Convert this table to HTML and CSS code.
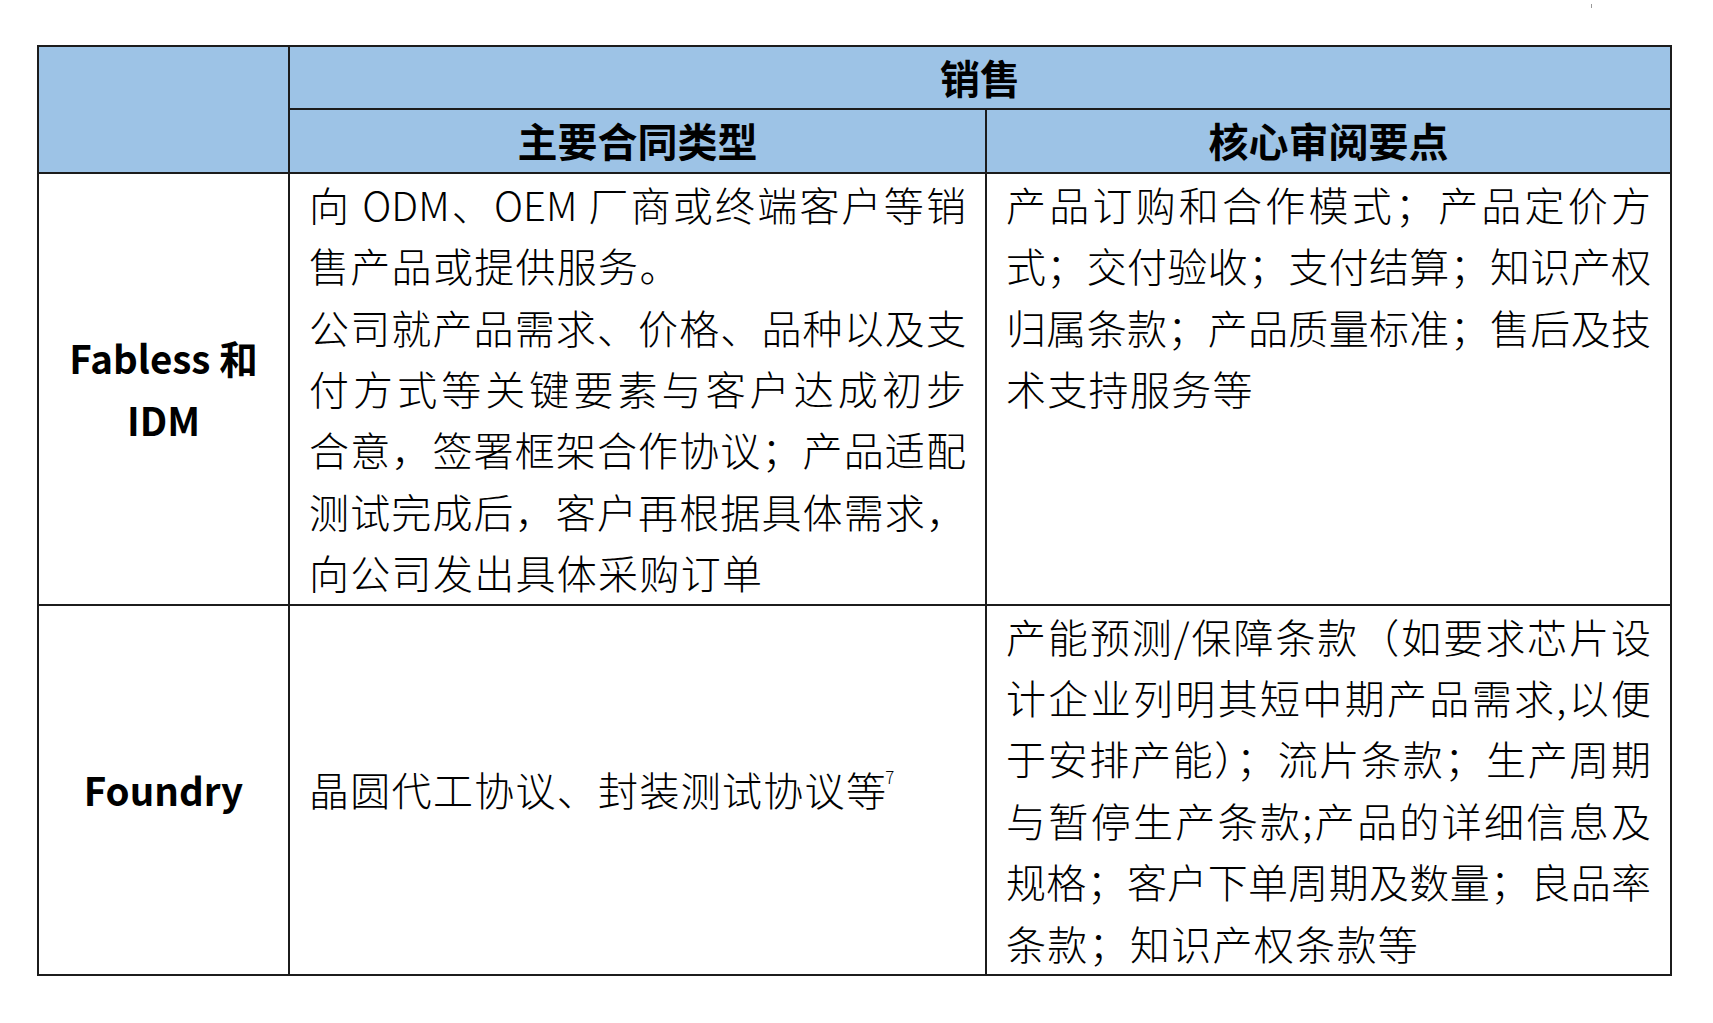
FILE: index.html
```html
<!DOCTYPE html>
<html lang="zh-CN">
<head>
<meta charset="utf-8">
<title>销售</title>
<link rel="stylesheet" href="styles.css">
</head>
<body>
<span class="speck"></span>
<div class="page">
  <table class="grid">
    <colgroup>
      <col class="c-type">
      <col class="c-contract">
      <col class="c-review">
    </colgroup>
    <thead>
      <tr>
        <th rowspan="2" class="blank"></th>
        <th colspan="2">销售</th>
      </tr>
      <tr>
        <th>主要合同类型</th>
        <th>核心审阅要点</th>
      </tr>
    </thead>
    <tbody>
      <tr>
        <td class="label">Fabless 和<br>IDM</td>
        <td class="text">
          <span class="ln">向 ODM、OEM 厂商或终端客户等销</span>
          <span class="ln end">售产品或提供服务。</span>
          <span class="ln">公司就产品需求、价格、品种以及支</span>
          <span class="ln">付方式等关键要素与客户达成初步</span>
          <span class="ln">合意，签署框架合作协议；产品适配</span>
          <span class="ln">测试完成后，客户再根据具体需求，</span>
          <span class="ln end">向公司发出具体采购订单</span>
        </td>
        <td class="text">
          <span class="ln">产品订购和合作模式；产品定价方</span>
          <span class="ln">式；交付验收；支付结算；知识产权</span>
          <span class="ln">归属条款；产品质量标准；售后及技</span>
          <span class="ln end">术支持服务等</span>
        </td>
      </tr>
      <tr>
        <td class="label">Foundry</td>
        <td class="text mid"><span class="ln end">晶圆代工协议、封装测试协议等<sup>7</sup></span></td>
        <td class="text">
          <span class="ln">产能预测/保障条款（如要求芯片设</span>
          <span class="ln">计企业列明其短中期产品需求,以便</span>
          <span class="ln">于安排产能）；流片条款；生产周期</span>
          <span class="ln">与暂停生产条款;产品的详细信息及</span>
          <span class="ln">规格；客户下单周期及数量；良品率</span>
          <span class="ln end">条款；知识产权条款等</span>
        </td>
      </tr>
    </tbody>
  </table>
</div>
</body>
</html>
```

FILE: styles.css
```css
html, body {
  margin: 0;
  padding: 0;
  background: #ffffff;
}

body {
  font-family: "Noto Sans CJK SC", "Noto Sans", sans-serif;
  color: #000000;
}

.page {
  padding: 45px 0 0 37px;
}

.speck {
  position: absolute;
  left: 1591px;
  top: 4px;
  width: 1px;
  height: 4px;
  background: #9a9a9a;
}

.grid {
  border-collapse: collapse;
  table-layout: fixed;
  width: 1633px;
  font-size: 40px;
  line-height: 61.4px;
}

.c-type { width: 251px; }
.c-contract { width: 697px; }
.c-review { width: 685px; }

.grid th,
.grid td {
  border: 2px solid #1c1c1c;
  padding: 0 19px;
}

.grid th {
  background: #9dc3e6;
  font-weight: 700;
  text-align: center;
  vertical-align: middle;
}

.grid td {
  vertical-align: top;
  font-weight: 300;
}

.grid td.label {
  font-size: 38.5px;
  font-weight: 700;
  text-align: center;
  vertical-align: middle;
  padding: 0 8px;
}

.grid td.mid {
  vertical-align: middle;
}

.ln {
  display: block;
  text-align: justify;
  text-align-last: justify;
}

.ln.end {
  text-align: left;
  text-align-last: left;
  letter-spacing: 1.3px;
}

sup {
  font-size: 17px;
  line-height: 0;
  vertical-align: 22px;
  margin-left: -2px;
}
```
